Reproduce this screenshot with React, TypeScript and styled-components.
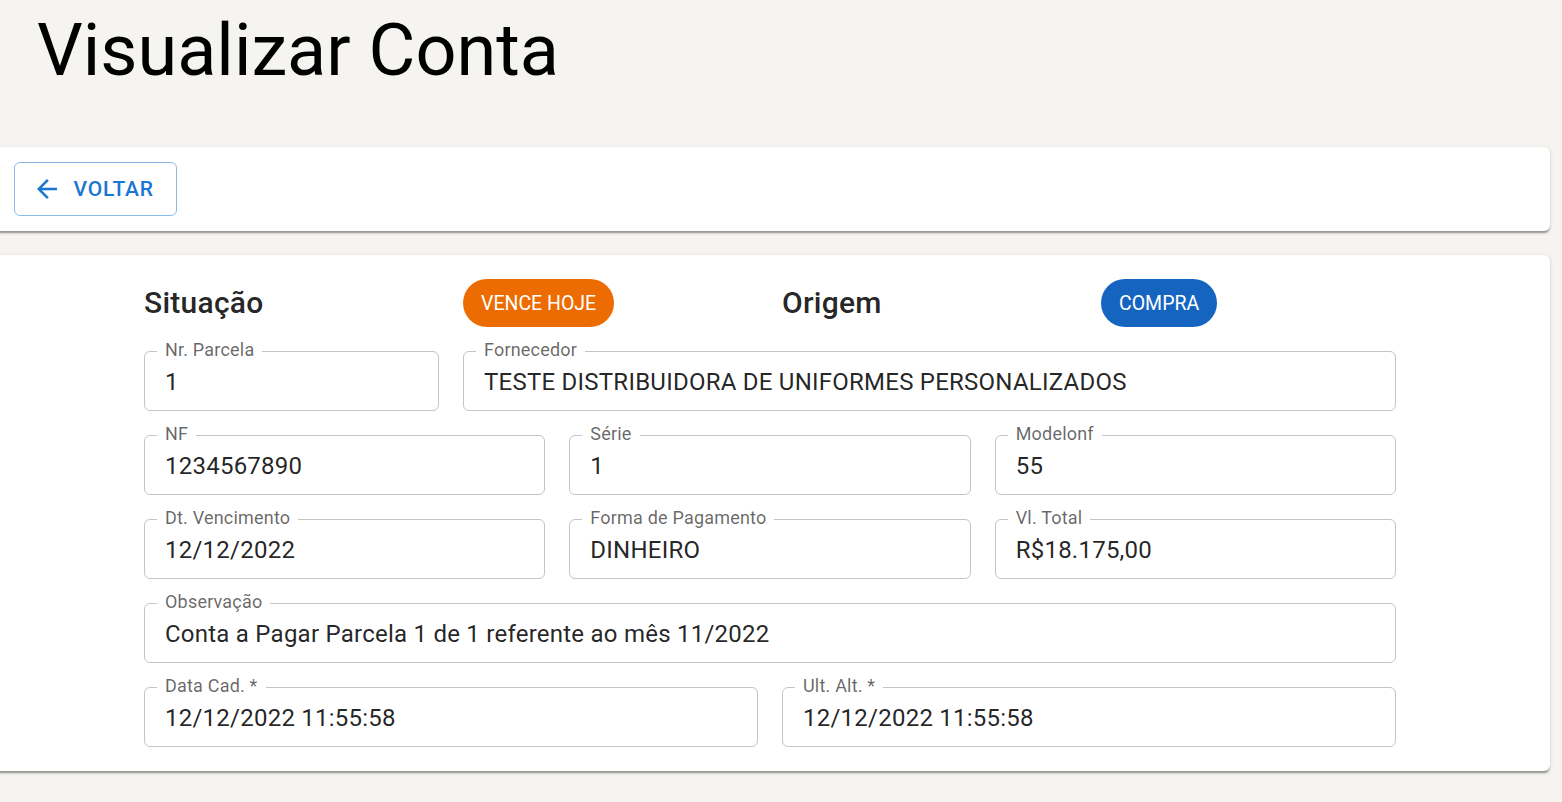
import React from "react";
import styled, { createGlobalStyle } from "styled-components";

const GlobalStyle = createGlobalStyle`
  html, body { margin: 0; padding: 0; }
  body {
    background: #f5f4f1;
    font-family: Roboto, "Noto Sans", "Liberation Sans", sans-serif;
    color: rgba(0, 0, 0, 0.87);
    overflow: hidden;
  }
  * { box-sizing: border-box; }
`;

const Page = styled.div`
  min-height: 100vh;
  padding: 9px 12px 0 0;
`;

const Title = styled.h1`
  margin: 0 0 54px 37px;
  font-size: 72px;
  line-height: 84px;
  font-weight: 400;
  color: #000;
`;

const Card = styled.section<{ $gap?: number }>`
  margin: ${(p) => p.$gap ?? 0}px 0 0 -8px;
  background: #fff;
  border-radius: 6px;
  box-shadow: 0 3px 1.5px -1.5px rgba(0, 0, 0, 0.2),
    0 1.5px 1.5px 0 rgba(0, 0, 0, 0.14), 0 1.5px 4.5px 0 rgba(0, 0, 0, 0.12);
`;

const Toolbar = styled(Card)`
  display: flex;
  align-items: center;
  padding: 15px 15px 15px 22px;
`;

const BackButton = styled.button`
  display: inline-flex;
  align-items: center;
  height: 54px;
  padding: 0 22.5px;
  border: 1px solid rgba(25, 118, 210, 0.5);
  border-radius: 6px;
  background: transparent;
  color: #1976d2;
  font-family: Roboto, "Liberation Sans", sans-serif;
  font-size: 21px;
  font-weight: 500;
  letter-spacing: 0.75px;
  text-transform: uppercase;
  cursor: pointer;
`;

const ButtonIcon = styled.svg`
  width: 30px;
  height: 30px;
  margin: 0 12px 0 -6px;
  fill: currentColor;
`;

const Details = styled(Card)`
  padding: 24px 154px 24px 152px;
`;

const Grid = styled.div`
  display: grid;
  grid-template-columns: repeat(12, 1fr);
  column-gap: 24px;
  row-gap: 24px;
`;

const Cell = styled.div<{ $span: number }>`
  grid-column: span ${(p) => p.$span};
  display: flex;
  align-items: center;
  min-height: 48px;
`;

const Heading = styled.h2`
  margin: 0;
  font-size: 30px;
  line-height: 36px;
  font-weight: 500;
  letter-spacing: 0.25px;
  color: rgba(0, 0, 0, 0.87);
`;

const Chip = styled.span<{ $color: string }>`
  display: inline-flex;
  align-items: center;
  height: 48px;
  padding: 0 18px;
  border-radius: 24px;
  background: ${(p) => p.$color};
  color: #fff;
  font-size: 19.5px;
  font-weight: 400;
  letter-spacing: 0;
  white-space: nowrap;
`;

const FieldBox = styled.div<{ $span: number }>`
  grid-column: span ${(p) => p.$span};
  position: relative;
  display: flex;
  align-items: center;
  height: 60px;
  padding: 2px 20px 0;
  border: 1px solid #c4c4c4;
  border-radius: 6px;
  font-size: 24px;
  line-height: 24px;
  letter-spacing: 0.24px;
  color: rgba(0, 0, 0, 0.87);
  white-space: nowrap;
`;

const FieldLabel = styled.span`
  position: absolute;
  top: -14px;
  left: 12px;
  padding: 0 8px;
  background: #fff;
  font-size: 18px;
  line-height: 24px;
  letter-spacing: 0.2px;
  color: rgba(0, 0, 0, 0.6);
`;

type FieldProps = { label: string; value: string; span: number };

const Field = ({ label, value, span }: FieldProps) => (
  <FieldBox $span={span}>
    <FieldLabel>{label}</FieldLabel>
    {value}
  </FieldBox>
);

const fields: FieldProps[] = [
  { label: "Nr. Parcela", value: "1", span: 3 },
  { label: "Fornecedor", value: "TESTE DISTRIBUIDORA DE UNIFORMES PERSONALIZADOS", span: 9 },
  { label: "NF", value: "1234567890", span: 4 },
  { label: "Série", value: "1", span: 4 },
  { label: "Modelonf", value: "55", span: 4 },
  { label: "Dt. Vencimento", value: "12/12/2022", span: 4 },
  { label: "Forma de Pagamento", value: "DINHEIRO", span: 4 },
  { label: "Vl. Total", value: "R$18.175,00", span: 4 },
  { label: "Observação", value: "Conta a Pagar Parcela 1 de 1 referente ao mês 11/2022", span: 12 },
  { label: "Data Cad. *", value: "12/12/2022 11:55:58", span: 6 },
  { label: "Ult. Alt. *", value: "12/12/2022 11:55:58", span: 6 },
];

export default function App() {
  return (
    <>
      <GlobalStyle />
      <Page>
        <Title>Visualizar Conta</Title>
        <Toolbar>
          <BackButton type="button">
            <ButtonIcon viewBox="0 0 24 24" aria-hidden="true">
              <path d="M20 11H7.83l5.59-5.59L12 4l-8 8 8 8 1.41-1.41L7.83 13H20v-2z" />
            </ButtonIcon>
            Voltar
          </BackButton>
        </Toolbar>
        <Details $gap={24}>
          <Grid>
            <Cell $span={3}>
              <Heading>Situação</Heading>
            </Cell>
            <Cell $span={3}>
              <Chip $color="#ed6c02">VENCE HOJE</Chip>
            </Cell>
            <Cell $span={3}>
              <Heading>Origem</Heading>
            </Cell>
            <Cell $span={3}>
              <Chip $color="#1565c0">COMPRA</Chip>
            </Cell>
            {fields.map((f) => (
              <Field key={f.label} {...f} />
            ))}
          </Grid>
        </Details>
      </Page>
    </>
  );
}
